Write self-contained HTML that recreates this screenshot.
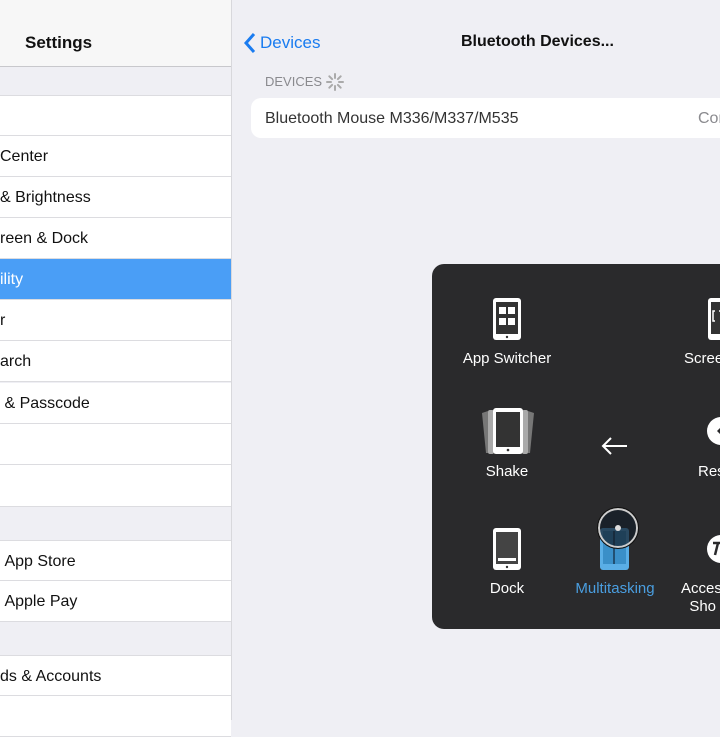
<!DOCTYPE html>
<html><head><style>
body{margin:0;width:720px;height:720px;overflow:hidden;position:relative;background:#efeff4;font-family:"Liberation Sans",sans-serif;}
.a{position:absolute}
.left{left:0;top:0;width:231px;height:720px;background:#efeff4;border-right:1px solid #d8d8dc}
.row{position:absolute;left:0;width:231px;height:41px;background:#fff;border-bottom:1px solid #dcdce0;box-sizing:border-box;font-size:16px;line-height:42px;color:#111}
.lbl{position:absolute;color:#fff;font-size:15px;text-align:center;width:120px}
</style></head><body>
<div class="a left">
<div class="a" style="left:0;top:0;width:231px;height:66px;background:#f7f7f7;border-bottom:1px solid #c8c8cc"></div>
<div class="a" style="left:25px;top:33px;font-size:17px;font-weight:bold;color:#111">Settings</div>
<div class="row" style="top:95px;border-top:1px solid #dcdce0"></div>
<div class="row" style="top:136px">Center</div>
<div class="row" style="top:177px">&amp; Brightness</div>
<div class="row" style="top:218px">reen &amp; Dock</div>
<div class="row" style="top:259px;background:#4a9ef6;color:#fff">ility</div>
<div class="row" style="top:300px">r</div>
<div class="row" style="top:341px">arch</div>
<div class="row" style="top:383px">&nbsp;&amp; Passcode</div>
<div class="row" style="top:424px"></div>
<div class="row" style="top:465px;height:42px"></div>
<div class="row" style="top:540px;border-top:1px solid #dcdce0">&nbsp;App Store</div>
<div class="row" style="top:581px">&nbsp;Apple Pay</div>
<div class="row" style="top:655px;border-top:1px solid #dcdce0">ds &amp; Accounts</div>
<div class="row" style="top:696px"></div>
</div>
<svg class="a" style="left:243px;top:32px" width="14" height="22"><path d="M11 2 L3 11 L11 20" stroke="#1a7cf0" stroke-width="3" fill="none"/></svg>
<div class="a" style="left:260px;top:33px;font-size:17px;color:#1a7cf0">Devices</div>
<div class="a" style="left:461px;top:33px;font-size:16px;font-weight:bold;color:#111">Bluetooth Devices...</div>
<div class="a" style="left:265px;top:74px;font-size:13px;color:#8a8a8e">DEVICES</div>
<svg class="a" style="left:325px;top:72px" width="20" height="20"><g stroke="#aaa" stroke-width="2" stroke-linecap="round"><path d="M10 2v4M10 14v4M2 10h4M14 10h4M4.3 4.3l2.8 2.8M12.9 12.9l2.8 2.8M4.3 15.7l2.8-2.8M12.9 7.1l2.8-2.8"/></g></svg>
<div class="a" style="left:251px;top:98px;width:480px;height:40px;background:#fff;border-radius:10px"></div>
<div class="a" style="left:265px;top:110px;font-size:16px;color:#333">Bluetooth Mouse M336/M337/M535</div>
<div class="a" style="left:698px;top:110px;font-size:16px;color:#8a8a8e">Con</div>
<div class="a" style="left:432px;top:264px;width:310px;height:365px;background:#2a2a2c;border-radius:12px"></div>
<svg class="a" style="left:492px;top:297px" width="30" height="44"><rect x="1" y="1" width="28" height="42" rx="3" fill="#fff"/><rect x="4" y="5" width="22" height="32" fill="#333"/><rect x="7" y="10" width="7" height="7" fill="#fff"/><rect x="16" y="10" width="7" height="7" fill="#fff"/><rect x="7" y="21" width="7" height="7" fill="#fff"/><rect x="16" y="21" width="7" height="7" fill="#fff"/><circle cx="15" cy="40" r="1.2" fill="#333"/></svg>
<div class="lbl" style="left:447px;top:350px">App Switcher</div>
<svg class="a" style="left:707px;top:297px" width="20" height="44"><rect x="1" y="1" width="28" height="42" rx="3" fill="#fff"/><rect x="4" y="5" width="22" height="32" fill="#333"/><path d="M8 14h-2v10h2M12 14h2" stroke="#fff" stroke-width="1.5" fill="none"/></svg>
<div class="lbl" style="left:684px;top:350px;text-align:left">Scree</div>
<svg class="a" style="left:479px;top:407px" width="58" height="50"><path d="M3 6 L9 4 L9 46 L7 46Z" fill="#777"/><path d="M55 6 L49 4 L49 46 L51 46Z" fill="#777"/><rect x="9" y="3" width="6" height="44" rx="2" fill="#aaa"/><rect x="43" y="3" width="6" height="44" rx="2" fill="#aaa"/><rect x="14" y="1" width="30" height="46" rx="3" fill="#fff"/><rect x="17" y="5" width="24" height="35" fill="#333"/><circle cx="29" cy="43" r="1.3" fill="#333"/></svg>
<div class="lbl" style="left:447px;top:463px">Shake</div>
<svg class="a" style="left:600px;top:435px" width="30" height="22"><path d="M27 11 H3 M11 3 L3 11 L11 19" stroke="#fff" stroke-width="2" fill="none"/></svg>
<svg class="a" style="left:706px;top:416px" width="14" height="30"><circle cx="15" cy="15" r="14" fill="#fff"/><path d="M16 10 L11 15 L16 20Z" fill="#2a2a2c"/></svg>
<div class="lbl" style="left:698px;top:463px;text-align:left">Res</div>
<svg class="a" style="left:492px;top:527px" width="30" height="44"><rect x="1" y="1" width="28" height="42" rx="3" fill="#fff"/><rect x="4" y="5" width="22" height="32" fill="#444"/><rect x="6" y="31" width="18" height="3" fill="#fff"/><circle cx="15" cy="40" r="1.2" fill="#333"/></svg>
<div class="lbl" style="left:447px;top:580px">Dock</div>
<svg class="a" style="left:596px;top:506px" width="44" height="66"><rect x="4" y="22" width="29" height="42" rx="3" fill="#5aaee6"/><rect x="7" y="25" width="23" height="33" fill="#3a8fc8"/><line x1="18" y1="25" x2="18" y2="58" stroke="#1b3a55" stroke-width="1.5"/><circle cx="22" cy="22" r="19" fill="rgba(20,30,40,0.7)" stroke="#ccc" stroke-width="2"/><circle cx="22" cy="22" r="20.5" fill="none" stroke="#111" stroke-width="1"/><circle cx="22" cy="22" r="3" fill="#ddd"/></svg>
<div class="lbl" style="left:555px;top:580px;color:#4a9ee0">Multitasking</div>
<svg class="a" style="left:706px;top:534px" width="14" height="30"><circle cx="15" cy="15" r="14" fill="#fff"/><path d="M7 9h8M12 9l-3 12" stroke="#2a2a2c" stroke-width="2.5" fill="none"/></svg>
<div class="lbl" style="left:681px;top:580px;text-align:left;line-height:18px">Acces<br>&nbsp;&nbsp;Sho</div>
</body></html>
